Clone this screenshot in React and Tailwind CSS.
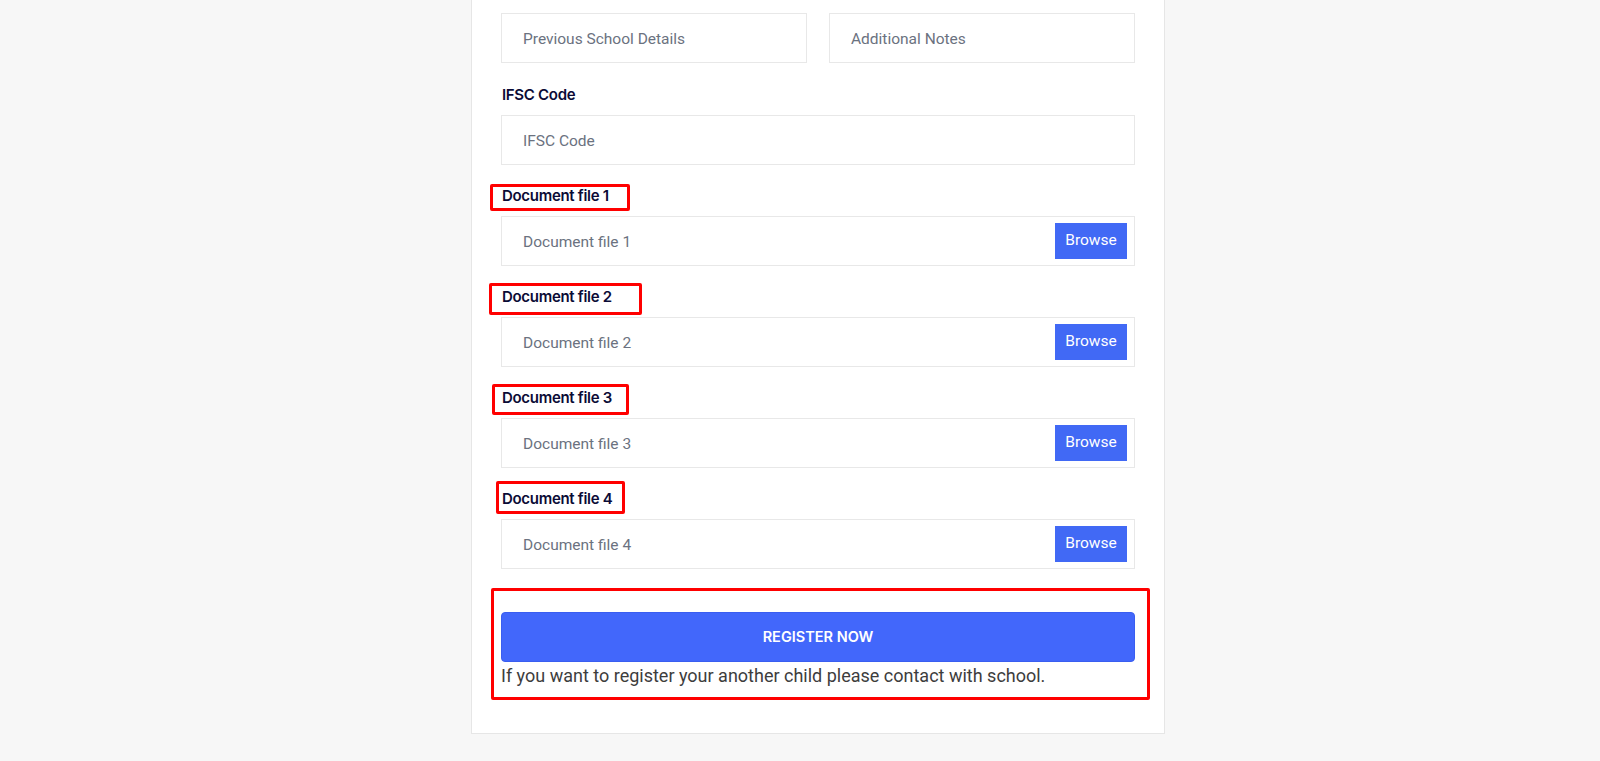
import React from "react";

const labelCls =
  "relative block h-[20px] leading-[20px] text-[15px] font-semibold text-[#0b0b36] mb-[10px] pl-[1px] font-['Inter',sans-serif] tracking-[-0.3px]";
const inputCls =
  "w-full h-[50px] border border-[#e8e8e8] bg-white pl-[21px] text-[15.5px] text-[#6b7280] font-['Roboto',sans-serif] flex items-center";

function FileField({ n, mark }) {
  return (
    <div className="mb-[21px]">
      <div className={labelCls}>
        Document file {n}
        <span className={"absolute border-[3px] border-[#ff0000] rounded-[2px] " + mark} />
      </div>
      <div className={inputCls + " justify-between pr-[7px]"}>
        <span className="pt-[4px]">Document file {n}</span>
        <span className="h-[36px] w-[72px] bg-[#4169f5] text-white text-[15.5px] flex items-center justify-center font-['Roboto',sans-serif]">
          Browse
        </span>
      </div>
    </div>
  );
}

export default function App() {
  return (
    <div className="min-h-screen w-full bg-[#f7f7f7] flex justify-center">
      <div className="w-[694px] ml-[36px] self-start bg-white border border-t-0 border-[#e6e6e6] px-[29px] pt-[13px] pb-[44px]">
        <div className="grid grid-cols-2 gap-[22px] mb-[22px]">
          <div className={inputCls}>
            <span className="pt-[4px]">Previous School Details</span>
          </div>
          <div className={inputCls}>
            <span className="pt-[4px]">Additional Notes</span>
          </div>
        </div>

        <div className="mb-[21px]">
          <div className={labelCls}>IFSC Code</div>
          <div className={inputCls}>
            <span className="pt-[4px]">IFSC Code</span>
          </div>
        </div>

        <FileField n={1} mark="-left-[11px] -top-[2px] w-[140px] h-[27px]" />
        <FileField n={2} mark="-left-[12px] -top-[4px] w-[153px] h-[32px]" />
        <FileField n={3} mark="-left-[9px] -top-[4px] w-[137px] h-[31px]" />
        <FileField n={4} mark="-left-[5px] -top-[8px] w-[129px] h-[33px]" />

        <div className="relative pt-[22px]">
          <button className="w-full h-[50px] rounded-[4px] bg-[#4267fb] border border-[#3a5ef0] text-white text-[14.5px] font-semibold font-['Inter',sans-serif]">
            REGISTER NOW
          </button>
          <p className="text-[18px] leading-[27px] text-[#3d3d3d] font-['Roboto',sans-serif]">
            If you want to register your another child please contact with school.
          </p>
          <span className="absolute -left-[10px] -top-[2px] w-[659px] h-[112px] border-[3px] border-[#ff0000] rounded-[2px]" />
        </div>
      </div>
    </div>
  );
}
